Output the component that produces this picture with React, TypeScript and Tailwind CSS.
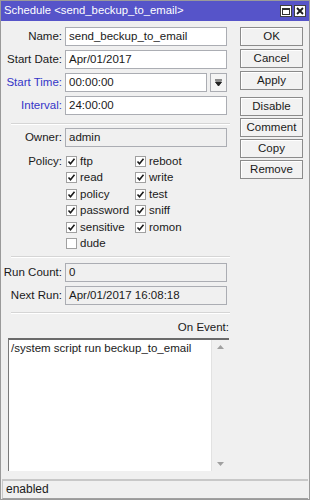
import React from 'react';

const policies: [string, boolean][] = [
  ['ftp', true],
  ['reboot', true],
  ['read', true],
  ['write', true],
  ['policy', true],
  ['test', true],
  ['password', true],
  ['sniff', true],
  ['sensitive', true],
  ['romon', true],
  ['dude', false],
];

function Check({ label, checked }: { label: string; checked: boolean }) {
  return (
    <div className="flex items-center h-[16.5px] gap-[3px]">
      <span className="w-[11px] h-[11px] border border-[#a0a0a0] bg-white flex items-center justify-center">
        {checked && (
          <svg width="9" height="9" viewBox="0 0 9 9">
            <path d="M1.5 4.5 L3.5 6.8 L7.5 1.8" stroke="#1a1a1a" strokeWidth="1.6" fill="none" />
          </svg>
        )}
      </span>
      <span>{label}</span>
    </div>
  );
}

function Field({
  label,
  value,
  blue,
  readOnly,
}: {
  label: string;
  value: string;
  blue?: boolean;
  readOnly?: boolean;
}) {
  return (
    <div className="flex items-center h-[19px]">
      <div
        className={`w-[62px] text-right pr-[3px] whitespace-nowrap ${blue ? 'text-[#3535c8]' : 'text-[#1a1a1a]'}`}
      >
        {label}
      </div>
      <div
        className={`w-[162px] h-[19px] border border-[#abadb3] px-[3px] flex items-center ${
          readOnly ? 'bg-[#f0f0f0]' : 'bg-white'
        }`}
      >
        {value}
      </div>
    </div>
  );
}

function Btn({ children }: { children: React.ReactNode }) {
  return (
    <div className="w-[63px] h-[19px] border border-[#8b8b8b] bg-[#f2f2f2] shadow-[inset_1px_1px_0_#ffffff] flex items-center justify-center text-[#1a1a1a]">
      {children}
    </div>
  );
}

function Sep() {
  return <div className="ml-[8px] w-[219px] h-[2px] border-t border-[#d5d5d5] border-b border-b-white" />;
}

export default function App() {
  return (
    <div
      className="w-[310px] h-[500px] bg-[#f0f0f0] border border-[#9a9a9a] flex flex-col text-[11.5px] leading-none text-[#1a1a1a] overflow-hidden"
      style={{ fontFamily: '"Liberation Sans", Arial, sans-serif' }}
    >
      <div className="h-[20px] bg-[#5654c9] flex items-center justify-between pl-[3px] pr-[3px] text-white text-[11.3px]">
        <span>Schedule &lt;send_beckup_to_email&gt;</span>
        <div className="flex gap-[2px]">
          <span className="w-[12px] h-[12px] bg-white border border-[#404040] flex items-center justify-center">
            <span className="w-[8px] h-[7px] border border-[#303030] border-t-2" />
          </span>
          <span className="w-[12px] h-[12px] bg-white border border-[#404040] flex items-center justify-center">
            <svg width="8" height="8" viewBox="0 0 8 8">
              <path d="M1 1 L7 7 M7 1 L1 7" stroke="#1a1a1a" strokeWidth="1.8" />
            </svg>
          </span>
        </div>
      </div>

      <div className="flex pt-[6px]">
        <div className="w-[232px] flex flex-col pl-[2px]">
          <div className="flex flex-col gap-[4px]">
            <Field label="Name:" value="send_beckup_to_email" />
            <Field label="Start Date:" value="Apr/01/2017" />
            <div className="flex items-center h-[19px]">
              <div className="w-[62px] text-right pr-[3px] whitespace-nowrap text-[#3535c8]">Start Time:</div>
              <div className="w-[142px] h-[19px] border border-[#abadb3] bg-white px-[3px] flex items-center">00:00:00</div>
              <div className="ml-[3px] w-[17px] h-[19px] border border-[#abadb3] bg-[#f4f4f4] flex items-center justify-center">
                <svg width="7" height="8" viewBox="0 0 7 8">
                  <path d="M0 1 H7 M0.5 3 H6.5 L3.5 7 Z" stroke="#222" strokeWidth="1" fill="#222" />
                </svg>
              </div>
            </div>
            <Field label="Interval:" value="24:00:00" blue />
          </div>

          <div className="mt-[8px] mb-[3px]">
            <Sep />
          </div>
          <Field label="Owner:" value="admin" readOnly />

          <div className="flex mt-[6px]">
            <div className="w-[62px] text-right pr-[3px] h-[16.5px] flex items-center justify-end">Policy:</div>
            <div className="grid grid-cols-[69px_80px] pl-[1px]">
              {policies.map(([l, c]) => (
                <Check key={l} label={l} checked={c} />
              ))}
            </div>
          </div>

          <div className="mt-[4px] mb-[5px]">
            <Sep />
          </div>
          <div className="flex flex-col gap-[4px]">
            <Field label="Run Count:" value="0" readOnly />
            <Field label="Next Run:" value="Apr/01/2017 16:08:18" readOnly />
          </div>
          <div className="mt-[7px]">
            <Sep />
          </div>
          <div className="text-right w-[226px] mt-[8px]">On Event:</div>
          <div className="ml-[5px] mt-[4px] w-[221px] h-[133px] flex border-t-2 border-l border-[#7a7a7a] border-t-[#6a6a6a] bg-white">
            <div className="flex-1 pl-[2px] pt-[3px]">/system script run beckup_to_email</div>
            <div className="w-[18px] bg-[#f0f0f0] flex flex-col justify-between items-center py-[5px] border-l border-[#e2e2e2]">
              <svg width="7" height="4" viewBox="0 0 7 4">
                <path d="M0 4 L3.5 0 L7 4 Z" fill="#a0a0a0" />
              </svg>
              <svg width="7" height="4" viewBox="0 0 7 4">
                <path d="M0 0 L3.5 4 L7 0 Z" fill="#a0a0a0" />
              </svg>
            </div>
          </div>
        </div>

        <div className="flex flex-col pl-[7px]">
          <div className="flex flex-col gap-[3px]">
            <Btn>OK</Btn>
            <Btn>Cancel</Btn>
            <Btn>Apply</Btn>
          </div>
          <div className="flex flex-col gap-[2px] mt-[7px]">
            <Btn>Disable</Btn>
            <Btn>Comment</Btn>
            <Btn>Copy</Btn>
            <Btn>Remove</Btn>
          </div>
        </div>
      </div>

      <div className="mt-[8px] h-[20px] mx-[1px] border-t-2 border-t-[#c8c8c8] border-b border-b-[#a0a0a0] border-l border-l-[#c8c8c8] flex items-center pl-[3px] text-[#1a1a1a] text-[12px]">
        enabled
      </div>
    </div>
  );
}
